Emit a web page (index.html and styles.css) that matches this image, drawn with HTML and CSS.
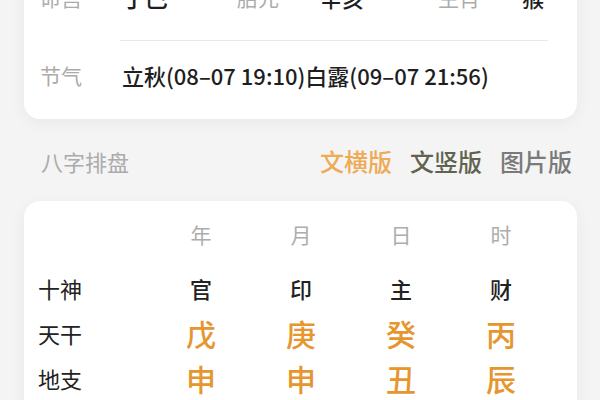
FILE: index.html
```html
<!DOCTYPE html>
<html lang="zh-CN">
<head>
<meta charset="utf-8">
<title>八字排盘</title>
<link rel="stylesheet" href="styles.css">
</head>
<body>
<div class="scroll">
  <section class="card info-card">
    <div class="info-row">
      <span class="label">命宫</span><span class="value value-lg">丁巳</span>
      <span class="label">胎元</span><span class="value">辛亥</span>
      <span class="label">生肖</span><span class="value">猴</span>
    </div>
    <div class="divider"></div>
    <div class="term-row">
      <span class="label">节气</span>
      <span class="value">立秋(08–07 19:10)白露(09–07 21:56)</span>
    </div>
  </section>

  <div class="section-head">
    <span class="section-title">八字排盘</span>
    <nav class="tabs">
      <span class="tab tab-active">文横版</span>
      <span class="tab tab-vertical">文竖版</span>
      <span class="tab tab-image">图片版</span>
    </nav>
  </div>

  <section class="card chart-card">
    <div class="chart-grid">
      <span class="head-cell"></span>
      <span class="head-cell">年</span>
      <span class="head-cell">月</span>
      <span class="head-cell">日</span>
      <span class="head-cell">时</span>

      <span class="row-label">十神</span>
      <span class="god">官</span>
      <span class="god">印</span>
      <span class="god">主</span>
      <span class="god">财</span>

      <span class="row-label">天干</span>
      <span class="stem">戊</span>
      <span class="stem">庚</span>
      <span class="stem">癸</span>
      <span class="stem">丙</span>

      <span class="row-label">地支</span>
      <span class="stem">申</span>
      <span class="stem">申</span>
      <span class="stem">丑</span>
      <span class="stem">辰</span>
    </div>
  </section>
</div>
</body>
</html>
```

FILE: styles.css
```css
html, body {
  margin: 0;
  padding: 0;
  background: #f4f4f4;
  overflow: hidden;
}

body {
  font-family: "Noto Sans CJK SC", "Noto Sans", sans-serif;
  color: #222;
}

.scroll {
  margin-top: -38px;
  padding: 0 23px 0 24px;
}

.card {
  background: #fff;
  border-radius: 16px;
  box-shadow: 0 4px 16px rgba(0, 0, 0, 0.05);
}

.info-card {
  padding: 20px 29px 29px 16px;
}

.info-row {
  display: grid;
  grid-template-columns: 82px 115px 83px 118px 84px auto;
  line-height: 30px;
  padding-bottom: 28px;
}

.label {
  color: #ababab;
  font-size: 21px;
}

.value {
  color: #1e1e1e;
  font-size: 22px;
  font-weight: 500;
}

.value-lg {
  font-size: 23px;
}

.divider {
  height: 1px;
  background: #e8e8e8;
  margin-left: 80px;
}

.term-row {
  display: grid;
  grid-template-columns: 82px auto;
  line-height: 30px;
  padding-top: 19px;
}

.term-row .value {
  font-size: 22px;
  white-space: nowrap;
}

.section-head {
  display: flex;
  align-items: center;
  justify-content: space-between;
  padding: 27px 5px 25px 17px;
  line-height: 30px;
}

.section-title {
  color: #ababab;
  font-size: 22px;
}

.tabs {
  display: flex;
  gap: 18px;
}

.tab {
  font-size: 24px;
  font-weight: 500;
}

.tab-active {
  color: #efaa55;
}

.tab-vertical {
  color: #5f6350;
}

.tab-image {
  color: #7a7a7a;
}

.chart-card {
  padding: 10px 14px 20px 14px;
}

.chart-grid {
  display: grid;
  grid-template-columns: 113px repeat(4, 100px);
  grid-template-rows: 55px 45px 45px 45px;
  align-items: center;
}

.head-cell {
  color: #adadad;
  font-size: 21px;
  text-align: center;
  line-height: 46px;
  align-self: start;
}

.row-label {
  font-size: 22px;
  color: #222;
  line-height: 45px;
}

.god {
  font-size: 22px;
  font-weight: 500;
  color: #222;
  text-align: center;
  line-height: 45px;
}

.stem {
  font-size: 30px;
  font-weight: 500;
  color: #e6962f;
  text-align: center;
  line-height: 45px;
}
```
